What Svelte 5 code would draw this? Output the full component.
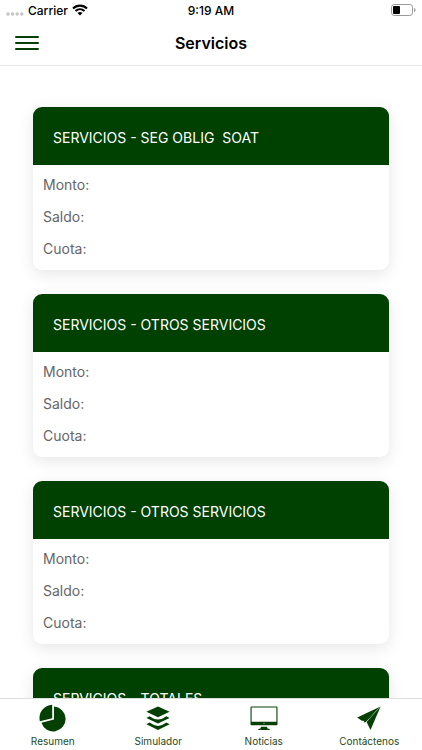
<script>
  const cards = [
    'SERVICIOS - SEG OBLIG  SOAT',
    'SERVICIOS - OTROS SERVICIOS',
    'SERVICIOS - OTROS SERVICIOS',
    'SERVICIOS - TOTALES'
  ];
  const fields = ['Monto:', 'Saldo:', 'Cuota:'];
  const tabs = [
    { id: 'resumen', label: 'Resumen' },
    { id: 'simulador', label: 'Simulador' },
    { id: 'noticias', label: 'Noticias' },
    { id: 'contactenos', label: 'Contáctenos' }
  ];
</script>

<div class="app">
  <header>
    <div class="status">
      <div class="carrier">
        <svg width="18" height="4" viewBox="0 0 18 4" fill="#c4c4c4" aria-hidden="true">
          <circle cx="2" cy="2" r="1.7" /><circle cx="6.6" cy="2" r="1.7" />
          <circle cx="11.2" cy="2" r="1.7" /><circle cx="15.8" cy="2" r="1.7" />
        </svg>
        <span>Carrier</span>
        <svg class="wifi" width="16" height="12" viewBox="0 0 16 12" aria-hidden="true">
          <path d="M1 4.5C5 .6 11 .6 15 4.5M3.5 7.1c2.6-2.4 6.4-2.4 9 0" fill="none" stroke="#000" stroke-width="2.1" />
          <path d="M8 11.5 5.5 9c1.4-1.3 3.6-1.3 5 0z" />
        </svg>
      </div>
      <time>9:19 AM</time>
      <svg class="battery" width="25" height="12" viewBox="0 0 25 12" aria-hidden="true">
        <rect x=".5" y=".5" width="21" height="11" rx="2.8" fill="none" stroke="#999" />
        <rect x="2" y="2" width="7" height="8" rx="1" />
        <path d="M23 4v4q1.6-.6 1.6-2T23 4" fill="#999" />
      </svg>
    </div>
    <div class="bar">
      <button class="menu" aria-label="Menú">
        <svg width="24" height="16" viewBox="0 0 24 16" aria-hidden="true">
          <path d="M1 2h22M1 8h22M1 14h22" stroke="#064006" stroke-width="2" stroke-linecap="round" />
        </svg>
      </button>
      <h1>Servicios</h1>
    </div>
  </header>

  <main>
    {#each cards as title}
      <section class="card">
        <h2>{title}</h2>
        <div class="body">
          {#each fields as field}
            <p>{field}</p>
          {/each}
        </div>
      </section>
    {/each}
  </main>

  <nav>
    {#each tabs as tab}
      <a href={'#' + tab.id}>
        <svg width="28" height="28" viewBox="0 0 28 28" fill="#044004" aria-hidden="true">
          {#if tab.id === 'resumen'}
            <path d="M13.2 .8V14.2L.9 17.3A13.2 13.2 0 0 1 13.2 .8z" />
            <path d="M15 2.6A12.4 12.4 0 1 1 2.4 18.8L15 15.6z" />
          {:else if tab.id === 'simulador'}
            <path d="M14 2.4 25.6 7.8 14 13.2 2.4 7.8z" />
            <path d="M2.4 13.9 5.6 12.2q4.3 3.3 8.4 3.3t8.4-3.3l3.2 1.7L14 19.5z" />
            <path d="M2.4 20.3 5.6 18.6q4.3 3.3 8.4 3.3t8.4-3.3l3.2 1.7L14 25.9z" />
          {:else if tab.id === 'noticias'}
            <path fill-rule="evenodd" d="M1.5 2.4h25q1 0 1 1v16.8q0 1-1 1h-25q-1 0-1-1V3.4q0-1 1-1zM1.6 3.4v14.4h24.8V3.4z" />
            <circle cx="14" cy="19.5" r=".6" fill="#b5cbb5" />
            <path d="M11 22.8h6l.5 1.6 2.2.6v.9H8.3V25l2.2-.6z" />
          {:else}
            <path d="M25.6 2.6 2.2 13.4l4.6 3.3 3.6.4z" />
            <path d="M24.4 4.6 8.9 17.6v.8l1.6-.2z" />
            <path d="M25.6 2.6 11.6 17.9l3.9 8.2z" />
          {/if}
        </svg>
        <span>{tab.label}</span>
      </a>
    {/each}
  </nav>
</div>

<style>
  :global(body) {
    margin: 0;
    background: #fff;
  }
  .app {
    height: 100vh;
    display: flex;
    flex-direction: column;
    overflow: hidden;
    font-family: Inter, 'Liberation Sans', sans-serif;
    color: #000;
  }
  header {
    flex: none;
    border-bottom: 1px solid #e6e6e6;
  }
  .status {
    display: grid;
    grid-template-columns: 1fr auto 1fr;
    align-items: center;
    height: 20px;
    padding: 0 6px;
    font-size: 12px;
    font-weight: 500;
  }
  .carrier {
    display: flex;
    align-items: center;
    gap: 4px;
  }
  .carrier > svg:first-child {
    margin-top: 7px;
  }
  .battery {
    justify-self: end;
  }
  .bar {
    display: grid;
    grid-template-columns: 24px 1fr 24px;
    align-items: center;
    height: 45px;
    padding: 0 15px;
  }
  .menu {
    display: flex;
    padding: 0;
    border: 0;
    background: none;
  }
  h1 {
    margin: 0;
    font-size: 16px;
    font-weight: 600;
    line-height: 24px;
    text-align: center;
  }
  main {
    flex: 1;
    min-height: 0;
    overflow: hidden;
    display: flex;
    flex-direction: column;
    gap: 24px;
    padding: 41px 33px 0;
  }
  .card {
    flex: none;
    border-radius: 9px;
    background: #fff;
    box-shadow: 0 4px 16px rgba(0, 0, 0, 0.1);
  }
  h2 {
    margin: 0;
    padding: 3px 20px 0;
    border-radius: 9px 9px 0 0;
    background: #004000;
    color: #fff;
    font-size: 14px;
    font-weight: 400;
    line-height: 55px;
    white-space: pre;
  }
  .body {
    padding: 4px 10px 5px;
  }
  p {
    margin: 0;
    color: #666;
    font-size: 14px;
    line-height: 32px;
  }
  nav {
    flex: none;
    display: grid;
    grid-template-columns: repeat(4, 1fr);
    height: 51px;
    border-top: 1px solid #dedede;
    background: #fff;
  }
  a {
    display: flex;
    flex-direction: column;
    align-items: center;
    padding-top: 5px;
    color: #1c4a1c;
    font-size: 10px;
    line-height: 18px;
    text-decoration: none;
  }
</style>
